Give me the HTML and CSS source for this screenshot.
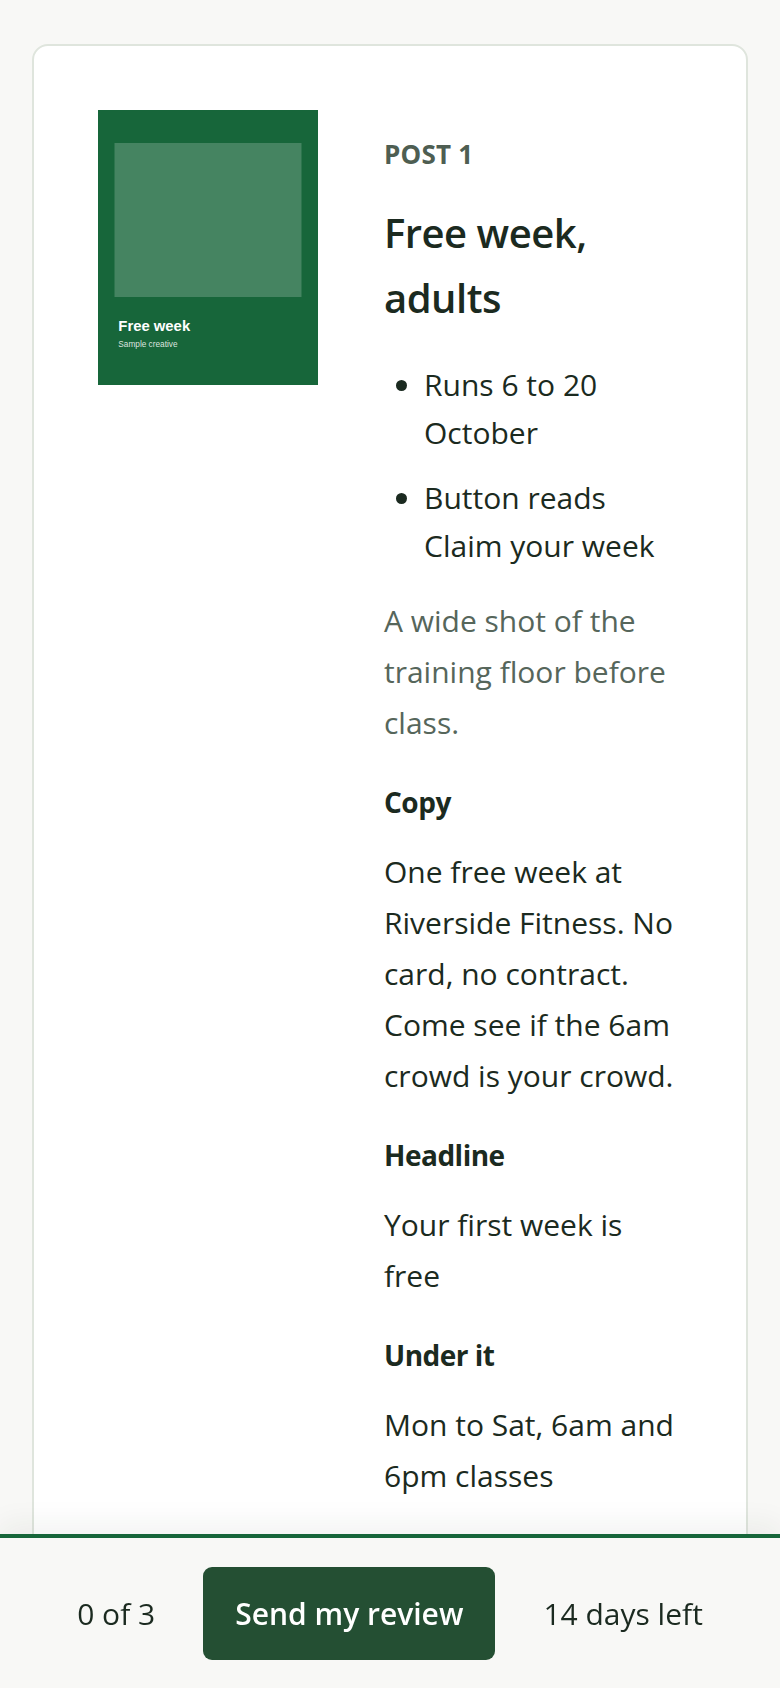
FILE: index.html
```html
<!DOCTYPE html>
<html lang="en">
<head>
<meta charset="utf-8">
<title>Post review</title>
<link rel="stylesheet" href="styles.css">
</head>
<body>
<main class="page">
  <article class="card">
    <div class="creative">
      <svg class="creative-svg" viewBox="0 0 400 500" width="220" height="275" aria-label="Sample creative">
        <rect x="0" y="0" width="400" height="500" fill="#17663a"/>
        <rect x="30" y="60" width="340" height="280" fill="#ffffff" fill-opacity="0.2"/>
        <text x="37" y="401" class="cr-title">Free week</text>
        <text x="37" y="431" class="cr-sub">Sample creative</text>
      </svg>
    </div>
    <div class="content">
      <div class="label">POST 1</div>
      <h2 class="title">Free week, adults</h2>
      <ul class="facts">
        <li>Runs 6 to 20 October</li>
        <li>Button reads Claim your week</li>
      </ul>
      <p class="desc">A wide shot of the training floor before class.</p>
      <h3 class="field">Copy</h3>
      <p class="value">One free week at Riverside Fitness. No card, no contract. Come see if the 6am crowd is your crowd.</p>
      <h3 class="field">Headline</h3>
      <p class="value">Your first week is free</p>
      <h3 class="field">Under it</h3>
      <p class="value">Mon to Sat, 6am and 6pm classes</p>
    </div>
  </article>
</main>
<footer class="bar">
  <span class="bar-text">0 of 3</span>
  <button class="send" type="button">Send my review</button>
  <span class="bar-text">14 days left</span>
</footer>
</body>
</html>
```
FILE: styles.css
```css
* { box-sizing: border-box; }

html, body {
  margin: 0;
  padding: 0;
}

body {
  background: #f8f8f6;
  color: #1b2a20;
  font-family: "Open Sans", "Noto Sans", sans-serif;
}

.page {
  padding: 44px 32px 0;
}

.card {
  background: #ffffff;
  border: 2px solid #dfe5dd;
  border-radius: 16px;
  padding: 64px;
  display: grid;
  grid-template-columns: 220px 1fr;
  column-gap: 66px;
  align-items: start;
}

.creative-svg {
  display: block;
}

.cr-title {
  font-family: "Liberation Sans", Arial, sans-serif;
  font-weight: 700;
  font-size: 27px;
  fill: #ffffff;
}

.cr-sub {
  font-family: "Liberation Sans", Arial, sans-serif;
  font-size: 15px;
  fill: #ffffff;
  fill-opacity: 0.85;
}

.content {
  display: flex;
  flex-direction: column;
  padding-top: 26px;
}

.label {
  font-size: 26px;
  line-height: 36px;
  font-weight: 700;
  color: #4e5e52;
  letter-spacing: 0.2px;
}

.title {
  margin: 28px 0 0;
  font-size: 40px;
  line-height: 65px;
  font-weight: 600;
  letter-spacing: -0.5px;
  color: #1b2a20;
}

.facts {
  margin: 31px 0 0;
  padding-left: 40px;
  font-size: 30px;
  line-height: 48px;
}

.facts li + li {
  margin-top: 17px;
}

.desc {
  margin: 25px 0 0;
  font-size: 30px;
  line-height: 51px;
  color: #56665b;
}

.field {
  margin: 32px 0 0;
  font-size: 28px;
  line-height: 45px;
  font-weight: 700;
  letter-spacing: -0.5px;
  color: #1b2a20;
}

.value {
  margin: 21px 0 0;
  font-size: 30px;
  line-height: 51px;
}

.bar {
  position: fixed;
  left: 0;
  right: 0;
  bottom: 0;
  height: 154px;
  border-top: 4px solid #17663a;
  background: #f8f8f6;
  box-shadow: 0 -10px 28px rgba(30, 50, 35, 0.06);
  display: flex;
  align-items: center;
  justify-content: center;
  gap: 48px;
}

.bar-text {
  font-size: 30px;
  line-height: 45px;
  color: #1b2a20;
}

.send {
  height: 93px;
  padding: 0 32px;
  border: none;
  border-radius: 9px;
  background: #244f33;
  color: #ffffff;
  font-family: "Open Sans", "Noto Sans", sans-serif;
  font-size: 30px;
  font-weight: 600;
  line-height: 45px;
}
```
